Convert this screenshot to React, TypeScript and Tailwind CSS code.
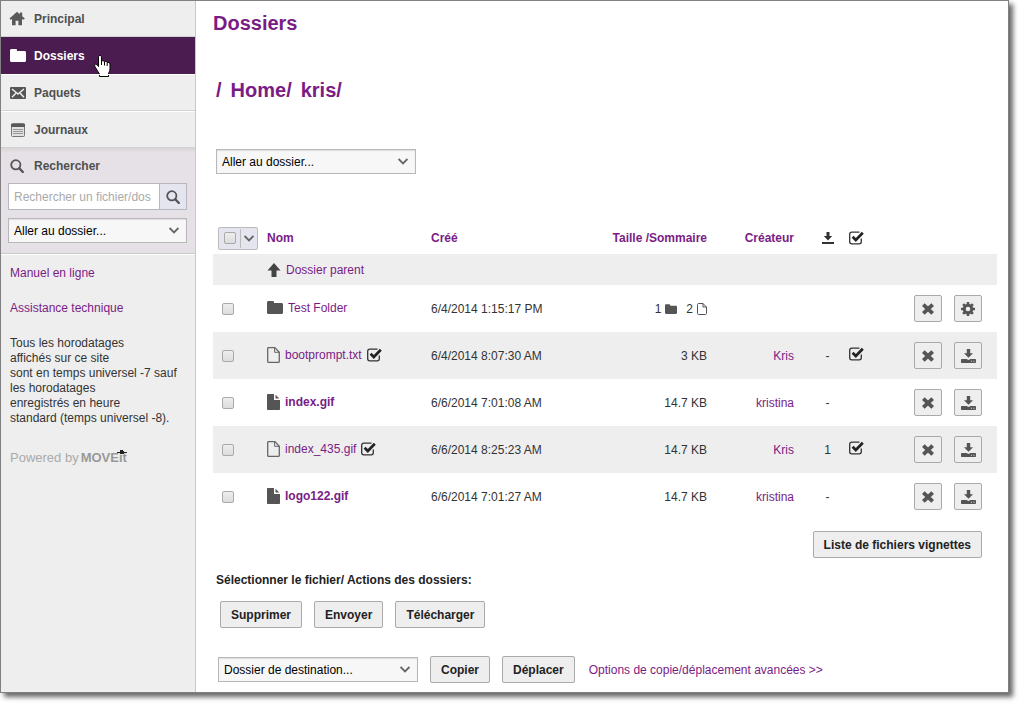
import type { ReactNode } from 'react'
import clsx from 'clsx'

type IconProps = { className?: string }

function HomeIcon() {
  return (
    <svg width="17" height="15" viewBox="0 0 17 15" fill="#5a5a5a">
      <path d="M8 .8.500 7.500 1.500 8.800 3 8v6.200h3.600V9.800h2.800v4.400H13V8l1.800.8 1-1.300-2.600-2.300V1.400h-2.400v1.800z" />
    </svg>
  )
}

function FolderIcon({ className }: IconProps) {
  return (
    <svg className={className} width="16" height="13" viewBox="0 0 16 13" fill="currentColor">
      <path d="M0 1.500C0 .6.6 0 1.500 0h4.200c.8 0 1.300.5 1.300 1.300V2h7.500c.9 0 1.500.6 1.500 1.500v8c0 .9-.6 1.500-1.500 1.500h-13C.6 13 0 12.400 0 11.500z" />
    </svg>
  )
}

function MailIcon() {
  return (
    <svg width="16" height="12" viewBox="0 0 16 12">
      <rect width="16" height="12" rx="1" fill="#555" />
      <path d="m2 2 6 5 6-5M2 10.200l3.800-4M14 10.200l-3.800-4" fill="none" stroke="#eee" strokeWidth="1.500" />
    </svg>
  )
}

function JournalIcon() {
  return (
    <svg width="14" height="14" viewBox="0 0 14 14">
      <rect x=".5" y=".5" width="13" height="13" rx="1" fill="#e0e0e0" stroke="#777" />
      <path d="M0 1h14v3H0z" fill="#5a5a5a" />
      <path d="M2 6.500h10M2 8.500h10M2 10.500h10" stroke="#999" />
    </svg>
  )
}

function SearchIcon() {
  return (
    <svg width="14" height="14" viewBox="0 0 14 14" fill="none" stroke="#555">
      <circle cx="5.800" cy="5.800" r="4.600" strokeWidth="1.800" />
      <path d="m9.300 9.300 3.500 3.700" strokeWidth="2.400" strokeLinecap="round" />
    </svg>
  )
}

function ChevronIcon({ className }: IconProps) {
  return (
    <svg className={className} width="10" height="7" viewBox="0 0 10 7" fill="none" stroke="#666" strokeWidth="1.800">
      <path d="m.6 1 4.400 4.400L9.400 1" />
    </svg>
  )
}

function UpIcon() {
  return (
    <svg width="14" height="14" viewBox="0 0 14 14" fill="#444">
      <path d="M7 0 .5 7.500h4V14h5V7.500h4z" />
    </svg>
  )
}

function FileIcon({ filled }: { filled?: boolean }) {
  return filled ? (
    <svg width="13" height="16" viewBox="0 0 13 16" fill="#555">
      <path d="M0 1c0-.6.4-1 1-1h6v6h6v9c0 .6-.4 1-1 1H1c-.6 0-1-.4-1-1z" />
      <path d="M8.500.8 12.300 4.600H8.500z" />
    </svg>
  ) : (
    <svg width="13" height="16" viewBox="0 0 13 16" fill="none" stroke="#666">
      <path d="M1.500.6h6.300l4.500 4.600v9.200c0 .6-.4 1-1 1H1.700c-.6 0-1-.4-1-1V1.500c0-.5.300-.9.8-.9z" strokeWidth="1.300" />
      <path d="M7.600.8v4.500h4.500" />
    </svg>
  )
}

function SmallFileIcon() {
  return (
    <svg width="10" height="12" viewBox="0 0 10 12" fill="none" stroke="#555">
      <path d="M.5 1.500c0-.6.400-1 1-1H6L9.500 4v6.500c0 .6-.4 1-1 1h-7c-.6 0-1-.4-1-1z" />
      <path d="M6 .5V4h3.500" />
    </svg>
  )
}

function CheckIcon() {
  return (
    <svg width="15" height="14" viewBox="0 0 15 14" fill="none" stroke="#333">
      <path d="M10.500 1.200H2.700c-1.200 0-2 .8-2 2v7.600c0 1.200.8 2 2 2h7.600c1.200 0 2-.8 2-2V7.500" strokeWidth="1.300" />
      <path d="m3.600 5.800 3.200 3.200 7-7.200" stroke="#222" strokeWidth="2.700" />
    </svg>
  )
}

function DownIcon() {
  return (
    <svg width="12" height="12" viewBox="0 0 12 12" fill="#333">
      <path d="M4.500 0h3v4h2.700L6 8.600 1.800 4h2.700zM0 10h12v2H0z" />
    </svg>
  )
}

function CloseIcon() {
  return (
    <svg width="12" height="12" viewBox="0 0 12 12" fill="none" stroke="#555" strokeWidth="4">
      <path d="m1.300 1.600 9.400 8.800M10.700 1.600l-9.400 8.800" />
    </svg>
  )
}

function GearIcon() {
  return (
    <svg width="14" height="14" viewBox="-7 -7 14 14" fill="none" stroke="#555">
      <circle r="3.800" strokeWidth="3" />
      <path
        d="M0-7v3M0 7V4M-7 0h3M7 0H4M-4.900-4.900l2 2M4.900 4.900l-2-2M-4.900 4.900l2-2M4.900-4.900l-2 2"
        strokeWidth="2.600"
      />
    </svg>
  )
}

function DownloadIcon() {
  return (
    <svg width="15" height="14" viewBox="0 0 15 14" fill="#555">
      <path d="M5.800 0h3.400v4.200H12L7.500 8.800 3 4.200h2.800z" />
      <path d="M0 11c0-.6.400-1 1-1h4.500l2 1 2-1H14c.6 0 1 .4 1 1v2c0 .6-.4 1-1 1H1c-.6 0-1-.4-1-1z" />
      <path d="M10 11.700h1v1h-1zM12.500 11.700h1v1h-1z" fill="#ddd" />
    </svg>
  )
}

function HandCursor() {
  return (
    <svg className="absolute left-[93px] top-[17px]" width="17" height="22" viewBox="0 0 17 22">
      <path
        d="M4.500 1.500c0-1.300 3-1.300 3 0V6c.8-.6 2.500-.4 3 .7.900-.5 2.300-.2 2.700.8 1.300-.4 2.800.2 2.800 1.500V14c0 1.800-1 3-1.500 4.500v3h-9v-2.500C4 17 3 15 1.500 12.500c-.8-1.300-1-2.200-.8-3 .8-.8 2-.2 3.800 2z"
        fill="#fff"
        stroke="#000"
      />
      <path d="M7.500 6v4M10.500 7v3.500M13.200 8v3" stroke="#000" />
    </svg>
  )
}

function MoveitLogo() {
  return (
    <span className="relative text-[13px] font-bold text-[#999]">
      MOVEit
      <svg className="absolute right-0 top-px" width="10" height="4" viewBox="0 0 10 4" fill="#222">
        <path d="M0 2h3V0h3v1h1v1h3v1H7v1H3V3H0z" />
      </svg>
    </span>
  )
}

function FolderSelect({ id, label, text, className }: { id: string; label: string; text: string; className?: string }) {
  return (
    <div className={clsx('relative', className)}>
      <select
        id={id}
        aria-label={label}
        className="block h-[25px] w-full appearance-none border border-[#b8b8b8] bg-[#f7f7f7] pl-[5px] text-xs text-black shadow-[inset_0_1px_1px_#ddd]"
      >
        <option>{text}</option>
      </select>
      <ChevronIcon className="pointer-events-none absolute right-2 top-[9px]" />
    </div>
  )
}

function Button({ children }: { children: ReactNode }) {
  return (
    <button className="h-[27px] rounded-xs border border-[#aaa] bg-[#eee] px-[10px] font-bold text-[#222]">
      {children}
    </button>
  )
}

function IconButton({ label, children }: { label: string; children: ReactNode }) {
  return (
    <button
      aria-label={label}
      className="flex h-[27px] w-7 items-center justify-center rounded-xs border border-[#aaa] bg-[#eee]"
    >
      {children}
    </button>
  )
}

function Checkbox({ label }: { label: string }) {
  return (
    <input
      type="checkbox"
      aria-label={label}
      className="block size-3 appearance-none rounded-[2px] border border-[#aaa] bg-linear-to-b from-[#eee] to-[#dcdcdc]"
    />
  )
}

const navItems = [
  { label: 'Principal', icon: <HomeIcon /> },
  { label: 'Dossiers', icon: <FolderIcon />, active: true },
  { label: 'Paquets', icon: <MailIcon /> },
  { label: 'Journaux', icon: <JournalIcon /> },
]

type FileRow = {
  name: string
  created: string
  size?: string
  creator?: string
  downloads?: string
  folder?: boolean
  isNew?: boolean
  checked?: boolean
}

const files: FileRow[] = [
  { name: 'Test Folder', created: '6/4/2014 1:15:17 PM', folder: true },
  { name: 'bootprompt.txt', created: '6/4/2014 8:07:30 AM', size: '3 KB', creator: 'Kris', downloads: '-', checked: true },
  { name: 'index.gif', created: '6/6/2014 7:01:08 AM', size: '14.7 KB', creator: 'kristina', downloads: '-', isNew: true },
  { name: 'index_435.gif', created: '6/6/2014 8:25:23 AM', size: '14.7 KB', creator: 'Kris', downloads: '1', checked: true },
  { name: 'logo122.gif', created: '6/6/2014 7:01:27 AM', size: '14.7 KB', creator: 'kristina', downloads: '-', isNew: true },
]

function Sidebar() {
  return (
    <aside className="w-[195px] shrink-0 border-r border-[#c8c8c8] bg-[#eee]">
      <nav>
        {navItems.map((item) => (
          <a
            key={item.label}
            href="#"
            className={clsx(
              'relative flex h-[37px] items-center gap-2 border-y pl-2 font-bold first:h-9 first:border-t-0',
              item.active
                ? 'border-[#4b1c50] bg-[#4b1c50] text-white'
                : 'border-b-[#d2d2d2] border-t-white text-[#505050]',
            )}
          >
            <span className="flex w-[17px] justify-center">{item.icon}</span>
            {item.label}
            {item.active && <HandCursor />}
          </a>
        ))}
      </nav>

      <div className="border-b border-[#c8c8c8] bg-[#e6e1e6] bg-linear-to-b from-[#d8d6d8] to-[#e6e1e6] to-[5px] pb-[10px] pl-[7px] pr-2 pt-[9px]">
        <div className="flex h-[18px] items-center gap-[10px] pl-[2px] font-bold text-[#505050]">
          <SearchIcon />
          <label htmlFor="search">Rechercher</label>
        </div>
        <div className="mt-2 flex h-[27px] border border-[#b8b8c0]">
          <input
            id="search"
            placeholder="Rechercher un fichier/dos"
            className="min-w-0 flex-1 bg-white pl-[5px] placeholder:text-[#aaa]"
          />
          <button
            aria-label="Rechercher"
            className="flex w-[27px] items-center justify-center border-l border-[#b8b8c0] bg-[#e5e5f0]"
          >
            <SearchIcon />
          </button>
        </div>
        <FolderSelect id="side-folder" label="Aller au dossier" text="Aller au dossier..." className="mt-2" />
      </div>

      <div className="border-t border-white px-[9px] pt-[9px]">
        <a href="#" className="block leading-[18px] text-[#7a1c86]">Manuel en ligne</a>
        <a href="#" className="mt-[17px] block leading-[18px] text-[#7a1c86]">Assistance technique</a>
        <p className="mt-[19px] whitespace-nowrap leading-[15px]">
          Tous les horodatages<br />
          affichés sur ce site<br />
          sont en temps universel -7 sauf<br />
          les horodatages<br />
          enregistrés en heure<br />
          standard (temps universel -8).
        </p>
        <p className="mt-[22px] flex h-5 items-center gap-[2px] text-[13px] text-[#aaa]">
          Powered by <MoveitLogo />
        </p>
      </div>
    </aside>
  )
}

function FileTable() {
  return (
    <table className="mt-12 w-full table-fixed">
      <colgroup>
        <col className="w-[54px]" />
        <col />
        <col className="w-[150px]" />
        <col className="w-[126px]" />
        <col className="w-[104px]" />
        <col className="w-[33px]" />
        <col className="w-[25px]" />
        <col className="w-[128px]" />
      </colgroup>
      <thead>
        <tr className="h-8 text-left text-[#7a1c86]">
          <th className="pl-[5px]">
            <div className="flex h-[23px] w-10 items-center rounded-xs border border-[#bbb] bg-[#e5e5f0] pl-[5px]">
              <Checkbox label="Tout sélectionner" />
              <button aria-label="Sélection" className="ml-1 flex h-[19px] flex-1 items-center justify-center border-l border-[#bbb]">
                <ChevronIcon />
              </button>
            </div>
          </th>
          <th>Nom</th>
          <th>Créé</th>
          <th className="text-right">Taille /Sommaire</th>
          <th className="pr-[17px] text-right">Créateur</th>
          <th><span className="flex justify-center"><DownIcon /></span></th>
          <th><span className="flex justify-center"><CheckIcon /></span></th>
          <th />
        </tr>
      </thead>
      <tbody>
        <tr className="h-[31px] bg-[#eee]">
          <td />
          <td colSpan={7}>
            <a href="#" className="flex items-center gap-[5px] text-[#7a1c86]">
              <UpIcon />
              Dossier parent
            </a>
          </td>
        </tr>
        {files.map((file) => (
          <tr key={file.name} className="h-[47px] even:bg-white odd:bg-[#eee]">
            <td className="pl-[9px]"><Checkbox label={file.name} /></td>
            <td className="pb-[2px]">
              <span className="flex items-center gap-[5px]">
                <a href="#" className={clsx('flex items-center gap-[5px] text-[#7a1c86]', file.isNew && 'font-bold')}>
                  {file.folder ? <FolderIcon className="text-[#555]" /> : <FileIcon filled={file.isNew} />}
                  {file.name}
                </a>
                {file.checked && <CheckIcon />}
              </span>
            </td>
            <td>{file.created}</td>
            <td className="text-right">
              {file.folder ? (
                <span className="flex items-center justify-end gap-1">
                  1 <FolderIcon className="mr-[5px] h-[10px] w-3 text-[#555]" /> 2 <SmallFileIcon />
                </span>
              ) : (
                file.size
              )}
            </td>
            <td className="pr-[17px] text-right">
              {file.creator && <a href="#" className="text-[#7a1c86]">{file.creator}</a>}
            </td>
            <td className="text-center">{file.downloads}</td>
            <td className="pb-[3px]">{file.checked && <span className="flex justify-center"><CheckIcon /></span>}</td>
            <td className="pr-[15px]">
              <div className="flex justify-end gap-3">
                <IconButton label="Supprimer"><CloseIcon /></IconButton>
                {file.folder ? (
                  <IconButton label="Paramètres"><GearIcon /></IconButton>
                ) : (
                  <IconButton label="Télécharger"><DownloadIcon /></IconButton>
                )}
              </div>
            </td>
          </tr>
        ))}
      </tbody>
    </table>
  )
}

export default function App() {
  return (
    <div className="bg-white pb-[15px] pr-[15px] font-['Liberation_Sans',Arial,sans-serif] text-xs text-[#333]">
      <div className="flex border border-[#808080] bg-white shadow-[4px_4px_5px_rgba(0,0,0,0.6)]">
        <Sidebar />
        <main className="min-w-0 flex-1 pb-[9px] pl-[17px] pr-[11px] pt-[10px]">
          <h1 className="text-[20px] font-bold leading-6 text-[#7a1c86]">Dossiers</h1>
          <div className="mt-[43px] flex gap-[9px] pl-[3px] text-[20px] font-bold leading-6 text-[#7a1c86]">
            <span>/</span>
            <a href="#">Home/</a>
            <a href="#">kris/</a>
          </div>
          <FolderSelect id="main-folder" label="Aller au dossier" text="Aller au dossier..." className="ml-[3px] mt-[47px] w-[200px]" />

          <FileTable />

          <div className="mt-[11px] flex justify-end pr-[15px]">
            <Button>Liste de fichiers vignettes</Button>
          </div>
          <p className="mt-[13px] pl-[3px] font-bold leading-[18px] text-[#222]">
            Sélectionner le fichier/ Actions des dossiers:
          </p>
          <div className="mt-3 flex gap-3 pl-[7px]">
            <Button>Supprimer</Button>
            <Button>Envoyer</Button>
            <Button>Télécharger</Button>
          </div>
          <div className="mt-7 flex items-center gap-3 pl-[5px]">
            <FolderSelect id="target-folder" label="Dossier de destination" text="Dossier de destination..." className="w-[200px]" />
            <Button>Copier</Button>
            <Button>Déplacer</Button>
            <a href="#" className="pl-[2px] text-[#7a1c86]">Options de copie/déplacement avancées &gt;&gt;</a>
          </div>
        </main>
      </div>
    </div>
  )
}
